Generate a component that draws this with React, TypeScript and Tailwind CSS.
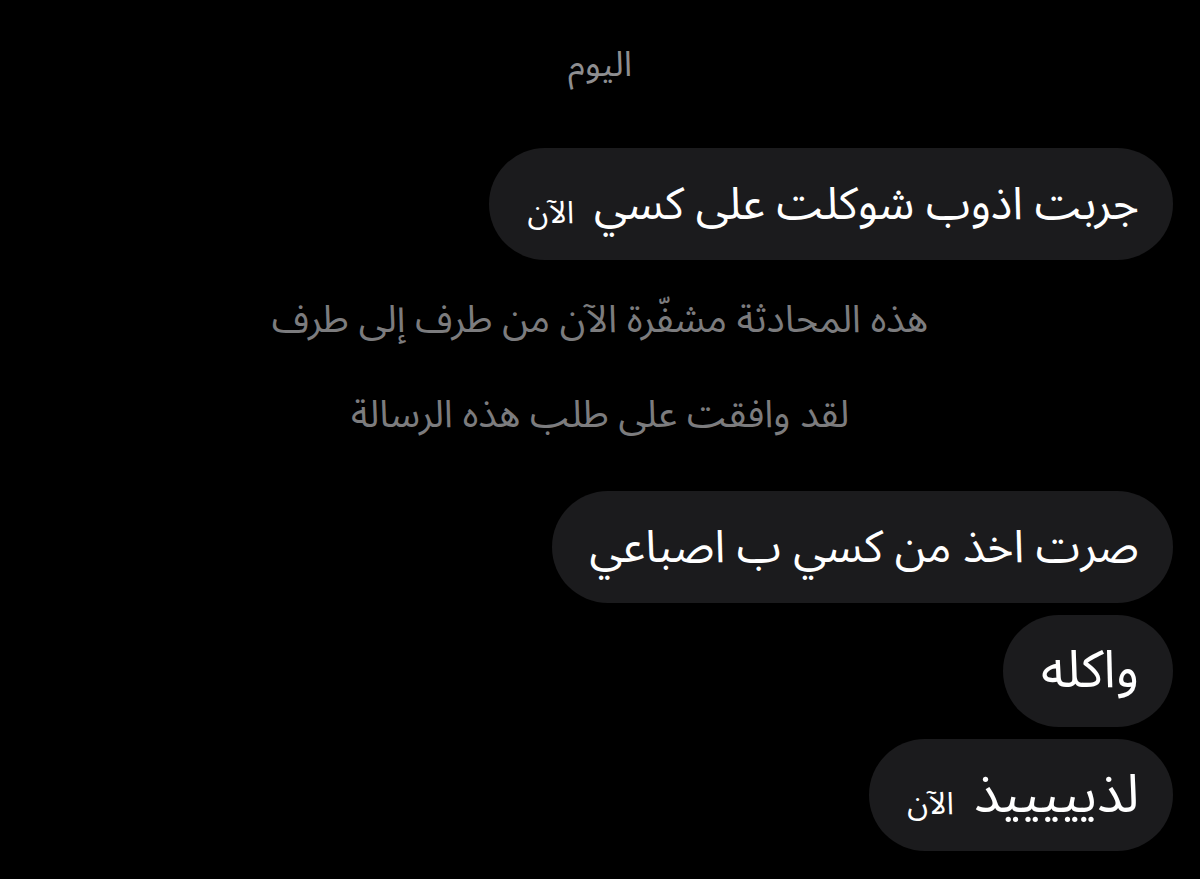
import React from "react";

type Msg = { text: string; time?: string; size?: string };

const font = { fontFamily: '"Noto Sans Arabic", "DejaVu Sans", "Noto Sans", sans-serif' };

// one outgoing bubble, right aligned
const Bubble = ({ text, time, size = "text-[45px]" }: Msg) => (
  <div className="flex justify-end">
    <div dir="rtl" className="h-[112px] rounded-full bg-[#1b1b1d] pl-[38px] pr-[34px] flex items-center gap-[20px]">
      <span className={`text-white ${size} leading-none`}>{text}</span>
      {time && <span className="text-white text-[31px] leading-none mt-[18px]">{time}</span>}
    </div>
  </div>
);

export default function App() {
  return (
    <div style={font} className="w-[1200px] h-[879px] bg-black overflow-hidden pr-[27px]">
      <div dir="rtl" className="pt-[43px] text-center text-[#8e8e90] text-[35px] leading-[44px] pl-[27px]">
        اليوم
      </div>

      <div className="mt-[61px]">
        <Bubble text="جربت اذوب شوكلت على كسي" time="الآن" />
      </div>

      <div dir="rtl" className="mt-[36px] flex flex-col items-center text-[#7c7c7e] text-[38px] leading-[48px] pl-[27px]">
        <div>هذه المحادثة مشفّرة الآن من طرف إلى طرف</div>
        <div className="mt-[47px]">لقد وافقت على طلب هذه الرسالة</div>
      </div>

      <div className="mt-[52px] flex flex-col gap-3">
        <Bubble text="صرت اخذ من كسي ب اصباعي" />
        <Bubble text="واكله" size="text-[52px]" />
        <Bubble text="لذيييييذ" time="الآن" size="text-[53px]" />
      </div>
    </div>
  );
}
